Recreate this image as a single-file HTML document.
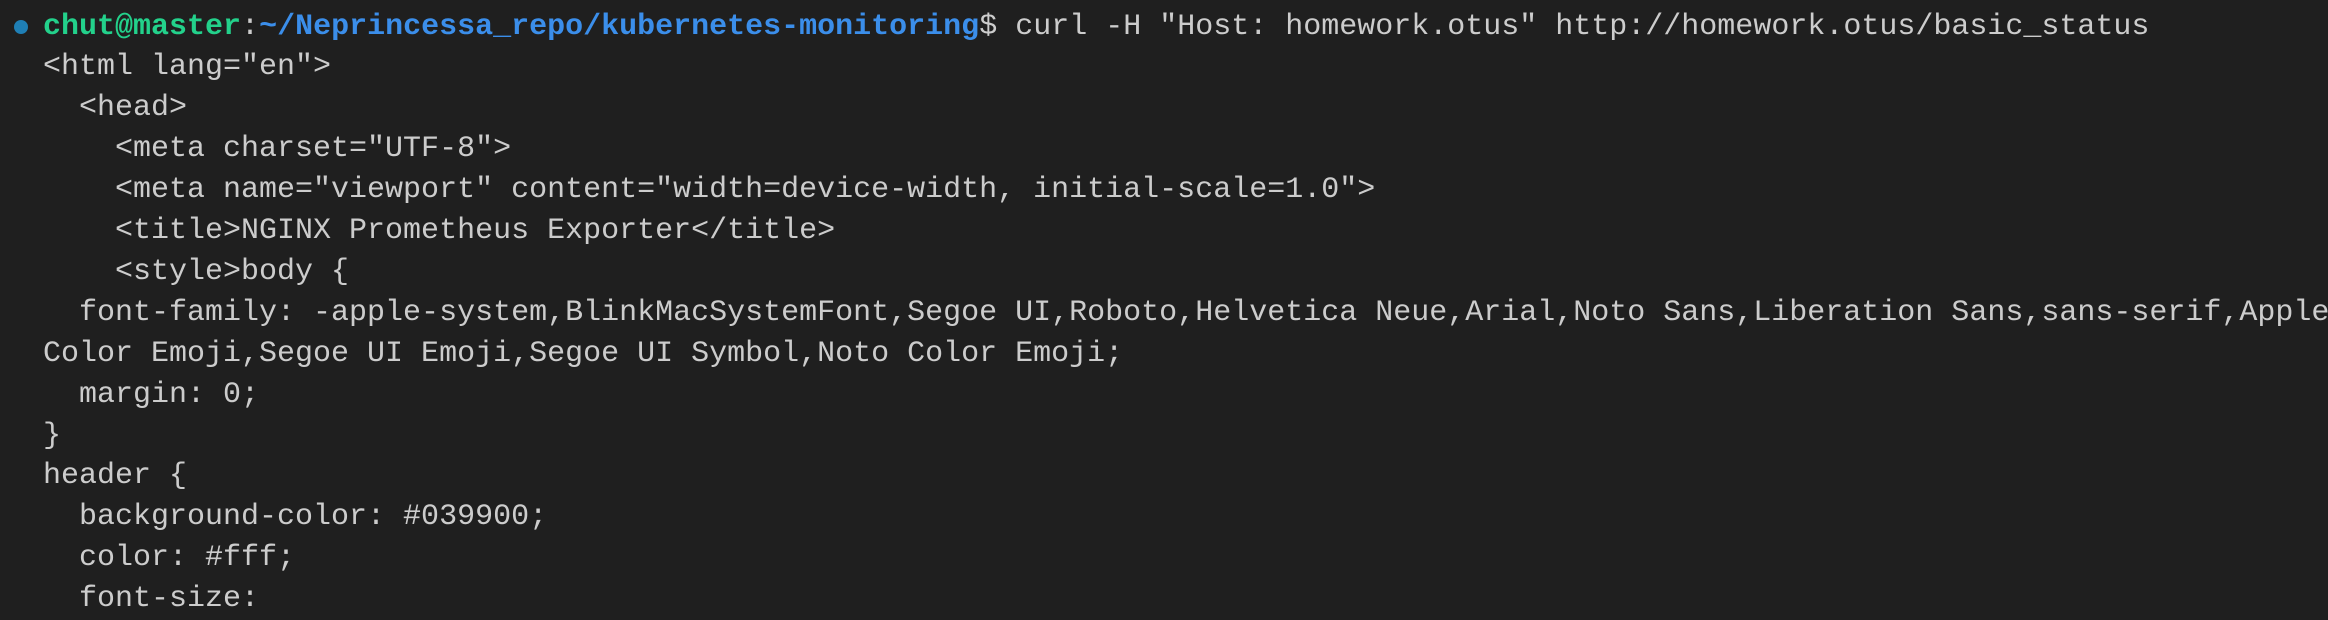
<!DOCTYPE html>
<html><head><meta charset="utf-8"><style>
html,body{margin:0;padding:0;background:#1f1f1f;width:2328px;height:590px;overflow:hidden}
pre{margin:0;position:absolute;left:43px;top:6.5px;font-family:"Liberation Mono",monospace;font-size:30px;line-height:40.9px;color:#cccccc;white-space:pre}
.g{color:#23d18b;font-weight:bold}.b{color:#3b8eea;font-weight:bold}
.dot{position:absolute;left:14px;top:20px;width:14px;height:14px;border-radius:50%;background:#1f7fb5}
</style></head><body>
<div class="dot"></div>
<pre><span class="g">chut@master</span>:<span class="b">~/Neprincessa_repo/kubernetes-monitoring</span>$ curl -H "Host: homework.otus" http://homework.otus/basic_status
&lt;html lang="en"&gt;
  &lt;head&gt;
    &lt;meta charset="UTF-8"&gt;
    &lt;meta name="viewport" content="width=device-width, initial-scale=1.0"&gt;
    &lt;title&gt;NGINX Prometheus Exporter&lt;/title&gt;
    &lt;style&gt;body {
  font-family: -apple-system,BlinkMacSystemFont,Segoe UI,Roboto,Helvetica Neue,Arial,Noto Sans,Liberation Sans,sans-serif,Apple
Color Emoji,Segoe UI Emoji,Segoe UI Symbol,Noto Color Emoji;
  margin: 0;
}
header {
  background-color: #039900;
  color: #fff;
  font-size:</pre>
</body></html>
